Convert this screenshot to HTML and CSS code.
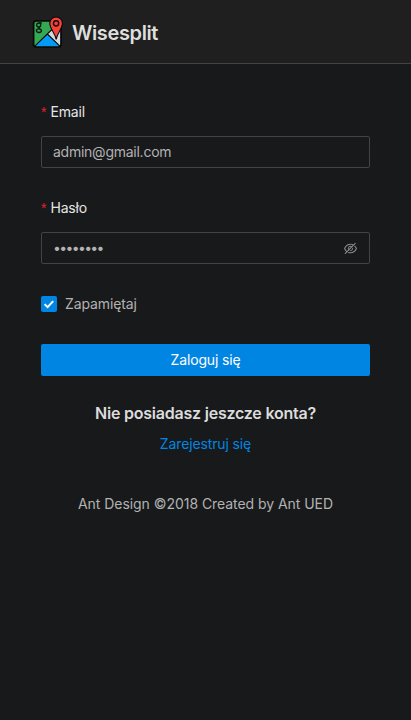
FILE: index.html
```html
<!DOCTYPE html>
<html lang="pl">
<head>
<meta charset="utf-8">
<meta name="viewport" content="width=device-width, initial-scale=1">
<title>Wisesplit</title>
<link rel="stylesheet" href="styles.css">
</head>
<body>
<header class="header">
  <svg class="logo" viewBox="0 0 32 32" aria-hidden="true">
    <rect x="1.6" y="4.8" width="27.4" height="26.2" rx="2.6" fill="#34a853"/>
    <path d="M15.5 18 29 4.8V28.5a2.3 2.3 0 0 1-.8 1.9Z" fill="#d3d8dd"/>
    <path d="M2.3 30.6 15.3 18 28.4 30.6Z" fill="#039bf5"/>
    <path d="M2.3 30.6 21.5 12M15.3 18 28.4 30.6" fill="none" stroke="#080808" stroke-width="1.1"/>
    <rect x="1.6" y="4.8" width="27.4" height="26.2" rx="2.6" fill="none" stroke="#080808" stroke-width="1.7"/>
    <g fill="none" stroke="#0b190f" stroke-width="1.3"><ellipse cx="6.7" cy="9" rx="2" ry="2"/><path d="M7 6.9h3M8 11c-1.8.8-1.3 1.5.1 1.9"/><ellipse cx="6.9" cy="14.7" rx="2.5" ry="1.8"/></g>
    <path d="M24.2 23.5C23.2 16.7 17.8 13 17.8 7.3a6.3 6.3 0 0 1 12.6 0C30.4 13 25.2 16.7 24.2 23.5Z" fill="#f5433a" stroke="#080808" stroke-width="1.1"/>
    <circle cx="24.1" cy="7.3" r="2.6" fill="#f5433a" stroke="#190909" stroke-width="1.5"/>
  </svg>
  <h1 class="brand">Wisesplit</h1>
</header>
<main class="content">
  <form>
    <div class="field">
      <label class="label" for="email"><span class="required">*</span><span>Email</span></label>
      <div class="control"><input class="input email" id="email" type="text" value="admin@gmail.com"></div>
    </div>
    <div class="field">
      <label class="label" for="password"><span class="required">*</span><span>Hasło</span></label>
      <div class="control">
        <input class="input password" id="password" type="password" value="password">
        <svg class="eye" viewBox="0 0 1024 1024" aria-hidden="true"><path d="M942.2 486.2Q889.47 375.11 816.7 305l-50.88 50.88C807.31 395.53 843.45 447.4 874.7 512 791.5 684.2 673.4 766 512 766q-72.67 0-133.87-22.38L323 798.75Q408 838 512 838q288.3 0 430.2-300.3a60.29 60.29 0 0 0 0-51.5zm-63.57-320.64L836 122.88a8 8 0 0 0-11.32 0L715.31 232.2Q624.86 186 512 186q-288.3 0-430.2 300.3a60.3 60.3 0 0 0 0 51.5q56.69 119.4 136.5 191.41L112.48 835a8 8 0 0 0 0 11.31L155.17 889a8 8 0 0 0 11.31 0l712.15-712.12a8 8 0 0 0 0-11.32zM149.3 512C232.6 339.8 350.7 258 512 258c54.54 0 104.13 9.36 149.12 28.39l-70.3 70.3a176 176 0 0 0-238.13 238.13l-83.42 83.42C223.1 637.49 183.3 582.28 149.3 512zm246.7 0a112.11 112.11 0 0 1 146.2-106.69L401.31 546.2A112 112 0 0 1 396 512z"/><path d="M508 624c-3.46 0-6.87-.16-10.25-.47l-52.82 52.82a176.09 176.09 0 0 0 227.42-227.42l-52.82 52.82c.31 3.38.47 6.79.47 10.25a111.94 111.94 0 0 1-112 112z"/></svg>
      </div>
    </div>
    <div class="remember"><span class="checkbox"><svg viewBox="0 0 16 16"><path d="m3.6 8.1 3 3 5.6-6" fill="none" stroke="#fff" stroke-width="2"/></svg></span><span class="remember-text">Zapamiętaj</span></div>
    <button class="submit" type="button">Zaloguj się</button>
  </form>
  <h2 class="question">Nie posiadasz jeszcze konta?</h2>
  <a class="register">Zarejestruj się</a>
</main>
<footer class="footer">Ant Design ©2018 Created by Ant UED</footer>
</body>
</html>
```
FILE: styles.css
```css
* { box-sizing: border-box; }
body {
  margin: 0;
  min-height: 720px;
  background: #18191b;
  color: #b2b2b2;
  font: 400 14px/22px Inter, "Liberation Sans", sans-serif;
}
.header {
  display: flex;
  align-items: center;
  height: 64px;
  padding: 0 32px;
  background: #1f1f1f;
  border-bottom: 1px solid #434343;
}
.logo { width: 32px; height: 32px; flex: none; }
.brand {
  margin: 2px 0 0 8px;
  color: #dedede;
  font-size: 20px;
  font-weight: 600;
  line-height: 28px;
  letter-spacing: -0.38px;
}
.content { padding: 32px 41px 0; }
.field { height: 96px; }
.label {
  display: flex;
  align-items: center;
  height: 32px;
  color: #e6e6e6;
  letter-spacing: -0.2px;
}
.required {
  width: 9.5px;
  color: #e0232c;
  font: 14px/14px "Liberation Sans", sans-serif;
}
.control {
  display: flex;
  align-items: center;
  height: 32px;
  margin-top: 8px;
  padding: 0 11px;
  border: 1px solid #434343;
  border-radius: 2px;
}
.input {
  flex: 1;
  min-width: 0;
  padding: 0;
  border: 0;
  outline: 0;
  background: transparent;
  color: #b2b2b2;
  font: inherit;
}
.email { letter-spacing: -0.25px; }
.password { letter-spacing: -1.65px; }
.eye { width: 15px; height: 15px; fill: #8c8c8c; }
.remember {
  display: flex;
  align-items: center;
  height: 32px;
  gap: 8px;
}
.remember-text { letter-spacing: -0.12px; }
.checkbox {
  display: flex;
  width: 16px;
  height: 16px;
  border-radius: 2px;
  background: #0086e2;
}
.checkbox svg { width: 16px; height: 16px; }
.submit {
  display: block;
  width: 100%;
  height: 32px;
  margin-top: 24px;
  padding: 0;
  border: 0;
  border-radius: 2px;
  background: #0086e2;
  color: #fff;
  font: inherit;
  letter-spacing: -0.15px;
}
.question {
  margin: 25px 0 8px;
  color: #dcdcdc;
  font-size: 16px;
  font-weight: 600;
  line-height: 24px;
  text-align: center;
  letter-spacing: -0.22px;
  white-space: nowrap;
}
.register {
  display: block;
  color: #0086e2;
  text-align: center;
  letter-spacing: -0.13px;
}
.footer {
  margin-top: 38px;
  text-align: center;
  letter-spacing: -0.05px;
}
```
